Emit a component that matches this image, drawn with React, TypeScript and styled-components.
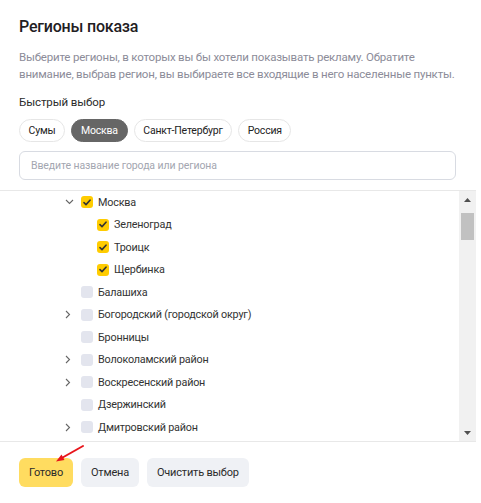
import React from "react";
import styled, { createGlobalStyle } from "styled-components";

const FONT = `Roboto, "Noto Sans", "Liberation Sans", sans-serif`;

const Global = createGlobalStyle`
  html, body { margin: 0; padding: 0; background: #fff; }
  body { font-family: ${FONT}; color: #222; }
  * { box-sizing: border-box; }
`;

const Page = styled.div`
  position: relative;
  width: 481px;
  height: 503px;
  overflow: hidden;
  display: flex;
  flex-direction: column;
`;

const Header = styled.div`
  padding: 14px 19px 0 19px;
  display: flex;
  flex-direction: column;
`;

const Title = styled.h1`
  margin: 0;
  font-size: 16px;
  letter-spacing: -0.2px;
  font-weight: 500;
  line-height: 26px;
  color: #1f2023;
`;

const Description = styled.p`
  margin: 9px 0 0 0;
  font-size: 11.5px;
  letter-spacing: -0.2px;
  line-height: 17px;
  color: #8c8c99;
  white-space: nowrap;
`;

const Label = styled.div`
  margin-top: 11px;
  font-size: 11.5px;
  letter-spacing: -0.1px;
  line-height: 17px;
  color: #2b2b2b;
`;

const Chips = styled.div`
  display: flex;
  gap: 6px;
  margin-top: 8px;
`;

const Chip = styled.button<{ $active?: boolean }>`
  height: 23px;
  padding: 0 ${(p) => (p.$active ? 9 : 8.5)}px;
  border-radius: 12px;
  border: 1px solid ${(p) => (p.$active ? "#666" : "#e6e6e6")};
  background: ${(p) => (p.$active ? "#666" : "#fff")};
  color: ${(p) => (p.$active ? "#fff" : "#222")};
  font-family: ${FONT};
  font-size: 10.5px;
  letter-spacing: -0.2px;
  line-height: 21px;
  cursor: pointer;
`;

const Search = styled.input`
  margin-top: 9px;
  width: 437px;
  height: 29px;
  border: 1px solid #d8dbe2;
  border-radius: 6px;
  padding: 0 11px;
  font-family: ${FONT};
  font-size: 10.5px;
  letter-spacing: -0.1px;
  color: #222;
  outline: none;
  &::placeholder { color: #a3a6b0; }
`;

const ListPanel = styled.div`
  margin-top: 10px;
  width: 476px;
  height: 252px;
  border-top: 1px solid #e8e8e8;
  border-bottom: 1px solid #e8e8e8;
  display: flex;
`;

const List = styled.div`
  flex: 1;
  overflow: hidden;
`;

const Row = styled.div<{ $level: number }>`
  height: 22.5px;
  display: flex;
  align-items: center;
  padding-left: ${(p) => 64 + p.$level * 16}px;
  font-size: 10.8px;
  letter-spacing: -0.2px;
  color: #333;
`;

const Toggle = styled.span`
  width: 17px;
  height: 12px;
  display: flex;
  align-items: center;
  justify-content: flex-start;
  padding-left: 1px;
  flex-shrink: 0;
`;

const Box = styled.span<{ $checked?: boolean }>`
  width: 12px;
  height: 12px;
  border-radius: 3px;
  background: ${(p) => (p.$checked ? "#fc0" : "#e3e5ee")};
  display: flex;
  align-items: center;
  justify-content: center;
  margin-right: 5px;
  flex-shrink: 0;
`;

const Scrollbar = styled.div`
  width: 17px;
  background: #f1f1f1;
  display: flex;
  flex-direction: column;
  align-items: center;
`;

const ArrowBtn = styled.div`
  height: 17px;
  width: 17px;
  display: flex;
  align-items: center;
  justify-content: center;
`;

const Thumb = styled.div`
  margin-top: 5px;
  width: 13px;
  height: 27px;
  background: #c1c1c1;
`;

const Spacer = styled.div`
  flex: 1;
`;

const Footer = styled.div`
  display: flex;
  gap: 8px;
  padding: 16px 19px 0 19px;
`;

const Button = styled.button<{ $primary?: boolean }>`
  height: 29px;
  padding: 0 10px;
  border: none;
  border-radius: 6px;
  background: ${(p) => (p.$primary ? "#ffdc60" : "#eff1f5")};
  color: #2b2b2b;
  font-family: ${FONT};
  font-size: 11px;
  letter-spacing: -0.2px;
  cursor: pointer;
`;

const Annotation = styled.svg`
  position: absolute;
  left: 50px;
  top: 440px;
  pointer-events: none;
`;

const Check = () => (
  <svg width="8" height="7" viewBox="0 0 8 7">
    <path d="M1 3.6 L3 5.6 L7 1.2" fill="none" stroke="#333" strokeWidth="1.6" strokeLinecap="round" strokeLinejoin="round" />
  </svg>
);

const Chevron = ({ open }: { open?: boolean }) =>
  open ? (
    <svg width="9" height="6" viewBox="0 0 9 6">
      <path d="M1 1 L4.5 4.5 L8 1" fill="none" stroke="#666" strokeWidth="1.1" />
    </svg>
  ) : (
    <svg width="6" height="9" viewBox="0 0 6 9">
      <path d="M1 1 L4.5 4.5 L1 8" fill="none" stroke="#666" strokeWidth="1.1" />
    </svg>
  );

type Item = { name: string; level: number; checked?: boolean; toggle?: "open" | "closed" };

const items: Item[] = [
  { name: "Москва", level: 0, checked: true, toggle: "open" },
  { name: "Зеленоград", level: 1, checked: true },
  { name: "Троицк", level: 1, checked: true },
  { name: "Щербинка", level: 1, checked: true },
  { name: "Балашиха", level: 0 },
  { name: "Богородский (городской округ)", level: 0, toggle: "closed" },
  { name: "Бронницы", level: 0 },
  { name: "Волоколамский район", level: 0, toggle: "closed" },
  { name: "Воскресенский район", level: 0, toggle: "closed" },
  { name: "Дзержинский", level: 0 },
  { name: "Дмитровский район", level: 0, toggle: "closed" },
];

export default function App() {
  return (
    <Page>
      <Global />
      <Header>
        <Title>Регионы показа</Title>
        <Description>
          Выберите регионы, в которых вы бы хотели показывать рекламу. Обратите
          <br />
          внимание, выбрав регион, вы выбираете все входящие в него населенные пункты.
        </Description>
        <Label>Быстрый выбор</Label>
        <Chips>
          <Chip>Сумы</Chip>
          <Chip $active>Москва</Chip>
          <Chip>Санкт-Петербург</Chip>
          <Chip>Россия</Chip>
        </Chips>
        <Search placeholder="Введите название города или региона" />
      </Header>
      <ListPanel>
        <List>
          {items.map((it) => (
            <Row key={it.name} $level={it.level}>
              <Toggle>{it.toggle ? <Chevron open={it.toggle === "open"} /> : null}</Toggle>
              <Box $checked={it.checked}>{it.checked && <Check />}</Box>
              {it.name}
            </Row>
          ))}
        </List>
        <Scrollbar>
          <ArrowBtn>
            <svg width="7" height="4" viewBox="0 0 7 4">
              <path d="M0 4 L3.5 0 L7 4 Z" fill="#505050" />
            </svg>
          </ArrowBtn>
          <Thumb />
          <Spacer />
          <ArrowBtn>
            <svg width="7" height="4" viewBox="0 0 7 4">
              <path d="M0 0 L3.5 4 L7 0 Z" fill="#505050" />
            </svg>
          </ArrowBtn>
        </Scrollbar>
      </ListPanel>
      <Footer>
        <Button $primary>Готово</Button>
        <Button>Отмена</Button>
        <Button>Очистить выбор</Button>
      </Footer>
      <Annotation width="40" height="30" viewBox="0 0 40 30">
        <path d="M33 6 L10 19" stroke="#e8151b" strokeWidth="2" strokeLinecap="round" />
        <path d="M6 21.5 L11.5 14.5 L14.5 20 Z" fill="#e8151b" />
      </Annotation>
    </Page>
  );
}
